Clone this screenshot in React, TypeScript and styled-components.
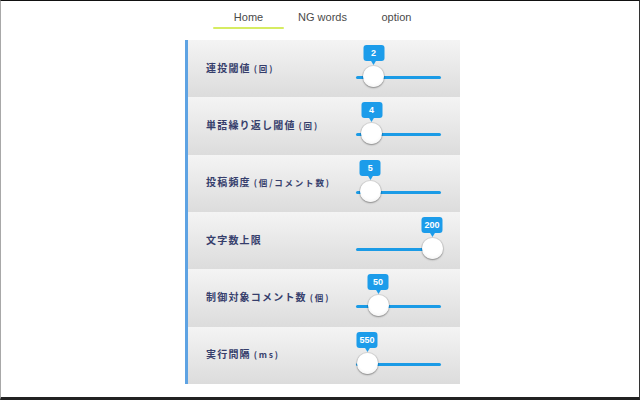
import React from "react";
import styled, { createGlobalStyle } from "styled-components";

const Global = createGlobalStyle`
  html, body { margin: 0; padding: 0; background: #fff; }
  body { width: 640px; height: 400px; overflow: hidden; }
`;

const Frame = styled.div`
  box-sizing: border-box;
  width: 640px;
  height: 400px;
  border-top: 1px solid #111;
  border-left: 1px solid #a8a8a8;
  border-right: 1px solid #333;
  border-bottom: 3px solid #222;
  background: #fff;
  display: flex;
  flex-direction: column;
  align-items: center;
  padding-left: 5px;
`;

const TabBar = styled.div`
  display: flex;
  height: 39px;
`;

const Tab = styled.div<{ $active?: boolean }>`
  width: 74px;
  display: flex;
  flex-direction: column;
  align-items: center;
  font-family: "Liberation Sans", Arial, sans-serif;
  font-size: 11px;
  color: #4a4a4a;
  padding-top: 10px;
  box-sizing: border-box;
  &::after {
    content: "";
    display: block;
    margin-top: 4px;
    width: 71px;
    height: 2px;
    border-radius: 1px;
    background: ${(p) => (p.$active ? "#d6ec62" : "transparent")};
  }
`;

const Panel = styled.div`
  width: 275px;
  box-sizing: border-box;
  border-left: 3px solid #5ea3e3;
  display: flex;
  flex-direction: column;
`;

const Row = styled.div`
  height: 57.33px;
  display: flex;
  align-items: center;
  justify-content: space-between;
  padding-left: 18px;
  padding-right: 19px;
  background: linear-gradient(#f4f4f4, #dcdcdc);
`;

const Label = styled.div`
  font-family: "Noto Sans CJK JP", "Liberation Sans", sans-serif;
  font-weight: 700;
  font-size: 10px;
  letter-spacing: 1.2px;
  color: #363e6c;
  white-space: nowrap;
  padding-bottom: 3px;
`;

const Unit = styled.span`
  font-size: 8.5px;
  letter-spacing: 1.8px;
  margin-left: 3px;
`;

const Slider = styled.div`
  position: relative;
  width: 85px;
  height: 100%;
`;

const Track = styled.div`
  position: absolute;
  left: 0;
  right: 0;
  top: 36px;
  height: 3px;
  border-radius: 2px;
  background: #1b9be6;
`;

const Thumb = styled.div`
  position: absolute;
  top: 26px;
  width: 21px;
  height: 21px;
  margin-left: -10.5px;
  border-radius: 50%;
  background: radial-gradient(circle at 50% 40%, #ffffff 55%, #ececec 100%);
  box-shadow: 0 1px 2px rgba(0, 0, 0, 0.35), 0 0 0 1px rgba(0, 0, 0, 0.08);
`;

const Bubble = styled.div`
  position: absolute;
  top: 5px;
  transform: translateX(-50%);
  min-width: 21px;
  height: 16px;
  padding: 0 3px;
  box-sizing: border-box;
  border-radius: 3px;
  background: #1c9cea;
  color: #fff;
  font-family: "Liberation Sans", Arial, sans-serif;
  font-weight: 700;
  font-size: 9px;
  line-height: 16px;
  text-align: center;
  &::after {
    content: "";
    position: absolute;
    left: 50%;
    top: 15px;
    margin-left: -3px;
    border-left: 3px solid transparent;
    border-right: 3px solid transparent;
    border-top: 5px solid #1c9cea;
  }
`;

type Item = { label: string; unit?: string; value: number; ratio: number };

const items: Item[] = [
  { label: "連投閾値", unit: "(回)", value: 2, ratio: 0.1 },
  { label: "単語繰り返し閾値", unit: "(回)", value: 4, ratio: 0.07 },
  { label: "投稿頻度", unit: "(個/コメント数)", value: 5, ratio: 0.05 },
  { label: "文字数上限", value: 200, ratio: 1 },
  { label: "制御対象コメント数", unit: "(個)", value: 50, ratio: 0.17 },
  { label: "実行間隔", unit: "(ms)", value: 550, ratio: 0 },
];

const SliderControl: React.FC<{ value: number; ratio: number }> = ({ value, ratio }) => {
  const x = 11 + ratio * 65;
  return (
    <Slider>
      <Track />
      <Bubble style={{ left: x }}>{value}</Bubble>
      <Thumb style={{ left: x }} />
    </Slider>
  );
};

export default function App() {
  return (
    <>
      <Global />
      <Frame>
        <TabBar>
          <Tab $active>Home</Tab>
          <Tab>NG words</Tab>
          <Tab>option</Tab>
        </TabBar>
        <Panel>
          {items.map((it) => (
            <Row key={it.label}>
              <Label>
                {it.label}
                {it.unit && <Unit>{it.unit}</Unit>}
              </Label>
              <SliderControl value={it.value} ratio={it.ratio} />
            </Row>
          ))}
        </Panel>
      </Frame>
    </>
  );
}
